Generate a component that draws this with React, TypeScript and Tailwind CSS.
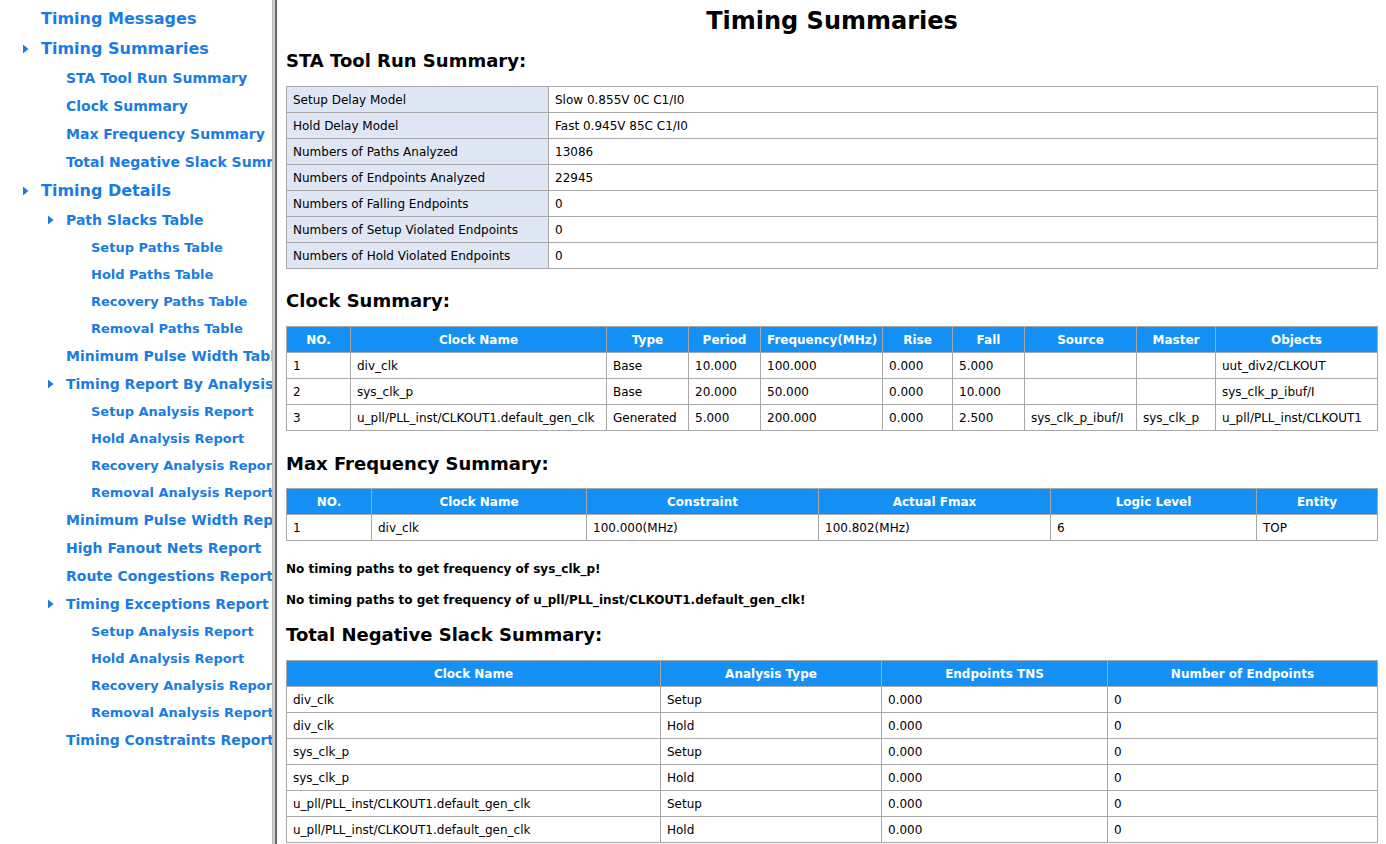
import React from 'react'

const FONT = { fontFamily: '"DejaVu Sans", Verdana, sans-serif' }

type NavItem = { label: string; level: 1 | 2 | 3; arrow?: boolean }

const NAV: NavItem[] = [
  { label: 'Timing Messages', level: 1 },
  { label: 'Timing Summaries', level: 1, arrow: true },
  { label: 'STA Tool Run Summary', level: 2 },
  { label: 'Clock Summary', level: 2 },
  { label: 'Max Frequency Summary', level: 2 },
  { label: 'Total Negative Slack Summary', level: 2 },
  { label: 'Timing Details', level: 1, arrow: true },
  { label: 'Path Slacks Table', level: 2, arrow: true },
  { label: 'Setup Paths Table', level: 3 },
  { label: 'Hold Paths Table', level: 3 },
  { label: 'Recovery Paths Table', level: 3 },
  { label: 'Removal Paths Table', level: 3 },
  { label: 'Minimum Pulse Width Table', level: 2 },
  { label: 'Timing Report By Analysis', level: 2, arrow: true },
  { label: 'Setup Analysis Report', level: 3 },
  { label: 'Hold Analysis Report', level: 3 },
  { label: 'Recovery Analysis Report', level: 3 },
  { label: 'Removal Analysis Report', level: 3 },
  { label: 'Minimum Pulse Width Report', level: 2 },
  { label: 'High Fanout Nets Report', level: 2 },
  { label: 'Route Congestions Report', level: 2 },
  { label: 'Timing Exceptions Report', level: 2, arrow: true },
  { label: 'Setup Analysis Report', level: 3 },
  { label: 'Hold Analysis Report', level: 3 },
  { label: 'Recovery Analysis Report', level: 3 },
  { label: 'Removal Analysis Report', level: 3 },
  { label: 'Timing Constraints Report', level: 2 },
]

const LEVEL_STYLE: Record<number, string> = {
  1: 'h-[30px] pl-[41px] text-[16px]',
  2: 'h-[28px] pl-[66px] text-[14px]',
  3: 'h-[27px] pl-[91px] text-[13px]',
}

const ARROW_POS: Record<number, string> = {
  1: 'left-[23px]',
  2: 'left-[48px]',
  3: 'left-[73px]',
}

function Sidebar() {
  return (
    <div className="w-[272px] shrink-0 overflow-hidden pt-[4px]">
      {NAV.map((item, i) => (
        <div
          key={i}
          className={`relative flex items-center whitespace-nowrap font-bold text-[#1a7ce2] ${LEVEL_STYLE[item.level]}`}
        >
          {item.arrow && (
            <svg className={`absolute top-1/2 -translate-y-1/2 ${ARROW_POS[item.level]}`} width="6" height="9" viewBox="0 0 6 9">
              <path d="M0 0 L5.5 4.5 L0 9 Z" fill="#1a7ce2" />
            </svg>
          )}
          {item.label}
        </div>
      ))}
    </div>
  )
}

const TD = 'h-[26px] border border-[#a8a8a8] px-[6px] py-0 text-left font-normal'
const TH = 'h-[26px] border border-[#a8a8a8] px-[6px] py-0 text-center font-bold text-white bg-[#1590f5]'

function H2({ children, className = '' }: { children: React.ReactNode; className?: string }) {
  return <h2 className={`h-[24px] leading-[24px] text-[18px] font-bold text-black ${className}`}>{children}</h2>
}

const runSummary = [
  ['Setup Delay Model', 'Slow 0.855V 0C C1/I0'],
  ['Hold Delay Model', 'Fast 0.945V 85C C1/I0'],
  ['Numbers of Paths Analyzed', '13086'],
  ['Numbers of Endpoints Analyzed', '22945'],
  ['Numbers of Falling Endpoints', '0'],
  ['Numbers of Setup Violated Endpoints', '0'],
  ['Numbers of Hold Violated Endpoints', '0'],
]

const clockCols = [
  ['NO.', 'w-[64px]'],
  ['Clock Name', 'w-[256px]'],
  ['Type', 'w-[82px]'],
  ['Period', 'w-[72px]'],
  ['Frequency(MHz)', 'w-[122px]'],
  ['Rise', 'w-[70px]'],
  ['Fall', 'w-[72px]'],
  ['Source', 'w-[112px]'],
  ['Master', 'w-[79px]'],
  ['Objects', ''],
]

const clocks = [
  ['1', 'div_clk', 'Base', '10.000', '100.000', '0.000', '5.000', '', '', 'uut_div2/CLKOUT'],
  ['2', 'sys_clk_p', 'Base', '20.000', '50.000', '0.000', '10.000', '', '', 'sys_clk_p_ibuf/I'],
  ['3', 'u_pll/PLL_inst/CLKOUT1.default_gen_clk', 'Generated', '5.000', '200.000', '0.000', '2.500', 'sys_clk_p_ibuf/I', 'sys_clk_p', 'u_pll/PLL_inst/CLKOUT1'],
]

const fmaxCols = [
  ['NO.', 'w-[85px]'],
  ['Clock Name', 'w-[215px]'],
  ['Constraint', 'w-[232px]'],
  ['Actual Fmax', 'w-[232px]'],
  ['Logic Level', 'w-[206px]'],
  ['Entity', ''],
]

const tnsCols = [
  ['Clock Name', 'w-[374px]'],
  ['Analysis Type', 'w-[221px]'],
  ['Endpoints TNS', 'w-[226px]'],
  ['Number of Endpoints', ''],
]

const tns = [
  ['div_clk', 'Setup'],
  ['div_clk', 'Hold'],
  ['sys_clk_p', 'Setup'],
  ['sys_clk_p', 'Hold'],
  ['u_pll/PLL_inst/CLKOUT1.default_gen_clk', 'Setup'],
  ['u_pll/PLL_inst/CLKOUT1.default_gen_clk', 'Hold'],
]

function Table({ cols, rows }: { cols: string[][]; rows: string[][] }) {
  return (
    <table className="w-full table-fixed border-collapse text-[12px] text-black">
      <thead>
        <tr>
          {cols.map(([label, w]) => (
            <th key={label} className={`${TH} ${w}`}>{label}</th>
          ))}
        </tr>
      </thead>
      <tbody>
        {rows.map((r, i) => (
          <tr key={i}>
            {r.map((c, j) => (
              <td key={j} className={`${TD} whitespace-nowrap`}>{c}</td>
            ))}
          </tr>
        ))}
      </tbody>
    </table>
  )
}

export default function App() {
  return (
    <div className="flex min-h-[844px] bg-white" style={FONT}>
      <Sidebar />
      <div className="w-[5px] shrink-0 bg-[#cfcfcf] border-l border-[#bdbdbd] border-r-2 border-r-[#6a6a6a]" />
      <main className="flex-1 pl-[9px] pr-[8px]">
        <h1 className="h-[38px] pt-[4px] flex items-center justify-center text-[24px] font-bold text-black">Timing Summaries</h1>

        <H2 className="mt-[11px] mb-[13px]">STA Tool Run Summary:</H2>
        <table className="w-full table-fixed border-collapse text-[12px] text-black">
          <tbody>
            {runSummary.map(([k, v]) => (
              <tr key={k}>
                <td className={`${TD} w-[262px] bg-[#dee7f3]`}>{k}</td>
                <td className={TD}>{v}</td>
              </tr>
            ))}
          </tbody>
        </table>

        <H2 className="mt-[20px] mb-[13px]">Clock Summary:</H2>
        <Table cols={clockCols} rows={clocks} />

        <H2 className="mt-[21px] mb-[12px]">Max Frequency Summary:</H2>
        <Table cols={fmaxCols} rows={[['1', 'div_clk', '100.000(MHz)', '100.802(MHz)', '6', 'TOP']]} />

        <p className="mt-[20px] h-[16px] leading-[16px] text-[12px] font-bold text-black">No timing paths to get frequency of sys_clk_p!</p>
        <p className="mt-[15px] h-[16px] leading-[16px] text-[12px] font-bold text-black">No timing paths to get frequency of u_pll/PLL_inst/CLKOUT1.default_gen_clk!</p>

        <H2 className="mt-[15px] mb-[13px]">Total Negative Slack Summary:</H2>
        <Table cols={tnsCols} rows={tns.map(([a, b]) => [a, b, '0.000', '0'])} />
      </main>
    </div>
  )
}
